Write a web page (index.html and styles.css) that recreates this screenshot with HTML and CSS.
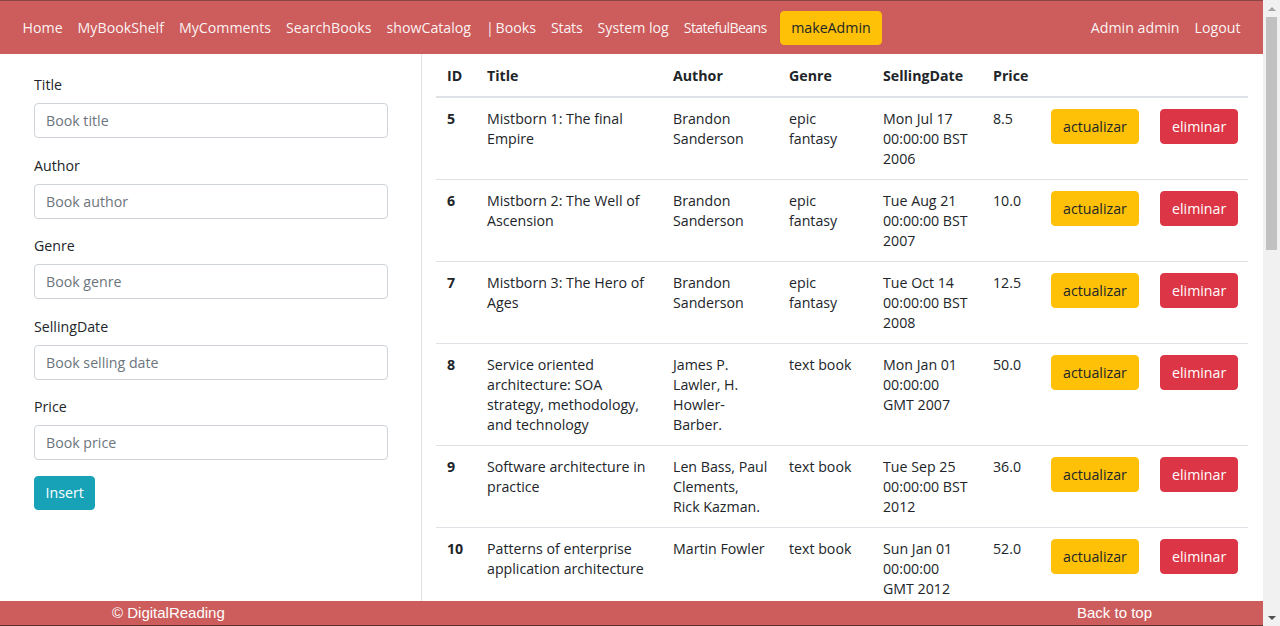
FILE: index.html
```html
<!DOCTYPE html>
<html lang="en">
<head>
<meta charset="utf-8">
<title>DigitalReading - Books</title>
<link rel="stylesheet" href="styles.css">
</head>
<body>
<div class="viewport">
  <div class="page">
    <nav class="navbar">
      <ul class="nav-list">
        <li><a class="nav-link" href="#">Home</a></li>
        <li><a class="nav-link" href="#">MyBookShelf</a></li>
        <li><a class="nav-link" href="#">MyComments</a></li>
        <li><a class="nav-link" href="#">SearchBooks</a></li>
        <li><a class="nav-link" href="#">showCatalog</a></li>
        <li><a class="nav-link" href="#"><span class="pipe">|</span> Books</a></li>
        <li><a class="nav-link nav-link--tight" href="#">Stats</a></li>
        <li><a class="nav-link" href="#">System log</a></li>
        <li><a class="nav-link nav-link--tighter" href="#">StatefulBeans</a></li>
        <li><button class="btn btn-warning nav-btn" type="button">makeAdmin</button></li>
      </ul>
      <ul class="nav-list">
        <li><a class="nav-link" href="#">Admin admin</a></li>
        <li><a class="nav-link" href="#">Logout</a></li>
      </ul>
    </nav>

    <div class="content">
      <aside class="sidebar">
        <form class="book-form">
          <div class="form-group">
            <label class="form-label" for="title">Title</label>
            <input class="form-control" id="title" type="text" placeholder="Book title">
          </div>
          <div class="form-group">
            <label class="form-label" for="author">Author</label>
            <input class="form-control" id="author" type="text" placeholder="Book author">
          </div>
          <div class="form-group">
            <label class="form-label" for="genre">Genre</label>
            <input class="form-control" id="genre" type="text" placeholder="Book genre">
          </div>
          <div class="form-group">
            <label class="form-label" for="date">SellingDate</label>
            <input class="form-control" id="date" type="text" placeholder="Book selling date">
          </div>
          <div class="form-group form-group--last">
            <label class="form-label" for="price">Price</label>
            <input class="form-control" id="price" type="text" placeholder="Book price">
          </div>
          <button class="btn btn-info" type="button">Insert</button>
        </form>
      </aside>

      <main class="main">
        <table class="books">
          <colgroup>
            <col class="c-id"><col class="c-title"><col class="c-author"><col class="c-genre">
            <col class="c-date"><col class="c-price"><col class="c-act"><col class="c-del">
          </colgroup>
          <thead>
            <tr><th>ID</th><th>Title</th><th>Author</th><th>Genre</th><th>SellingDate</th><th>Price</th><th></th><th></th></tr>
          </thead>
          <tbody>
            <tr>
              <th scope="row">5</th><td>Mistborn 1: The final Empire</td><td class="author">Brandon Sanderson</td><td>epic fantasy</td>
              <td class="date">Mon Jul 17 00:00:00 BST 2006</td><td>8.5</td>
              <td><button class="btn btn-warning" type="button">actualizar</button></td>
              <td><button class="btn btn-danger" type="button">eliminar</button></td>
            </tr>
            <tr>
              <th scope="row">6</th><td>Mistborn 2: The Well of Ascension</td><td class="author">Brandon Sanderson</td><td>epic fantasy</td>
              <td class="date">Tue Aug 21 00:00:00 BST 2007</td><td>10.0</td>
              <td><button class="btn btn-warning" type="button">actualizar</button></td>
              <td><button class="btn btn-danger" type="button">eliminar</button></td>
            </tr>
            <tr>
              <th scope="row">7</th><td>Mistborn 3: The Hero of Ages</td><td class="author">Brandon Sanderson</td><td>epic fantasy</td>
              <td class="date">Tue Oct 14 00:00:00 BST 2008</td><td>12.5</td>
              <td><button class="btn btn-warning" type="button">actualizar</button></td>
              <td><button class="btn btn-danger" type="button">eliminar</button></td>
            </tr>
            <tr>
              <th scope="row">8</th><td>Service oriented architecture: SOA strategy, methodology, and technology</td><td class="author">James P. Lawler, H. Howler-Barber.</td><td>text book</td>
              <td class="date">Mon Jan 01 00:00:00 GMT 2007</td><td>50.0</td>
              <td><button class="btn btn-warning" type="button">actualizar</button></td>
              <td><button class="btn btn-danger" type="button">eliminar</button></td>
            </tr>
            <tr>
              <th scope="row">9</th><td>Software architecture in practice</td><td class="author">Len Bass, Paul Clements, Rick Kazman.</td><td>text book</td>
              <td class="date">Tue Sep 25 00:00:00 BST 2012</td><td>36.0</td>
              <td><button class="btn btn-warning" type="button">actualizar</button></td>
              <td><button class="btn btn-danger" type="button">eliminar</button></td>
            </tr>
            <tr>
              <th scope="row">10</th><td>Patterns of enterprise application architecture</td><td class="author">Martin Fowler</td><td>text book</td>
              <td class="date">Sun Jan 01 00:00:00 GMT 2012</td><td>52.0</td>
              <td><button class="btn btn-warning" type="button">actualizar</button></td>
              <td><button class="btn btn-danger" type="button">eliminar</button></td>
            </tr>
          </tbody>
        </table>
      </main>
    </div>

    <footer class="footer">
      <span>© DigitalReading</span>
      <a class="footer-link" href="#">Back to top</a>
    </footer>
  </div>

  <div class="scrollbar" aria-hidden="true">
    <span class="sb-arrow sb-up"></span>
    <span class="sb-track"><span class="sb-thumb"></span></span>
    <span class="sb-arrow sb-down"></span>
  </div>
</div>
</body>
</html>
```

FILE: styles.css
```css
* {
  box-sizing: border-box;
}

html,
body {
  margin: 0;
  height: 100%;
  overflow: hidden;
}

body {
  font-family: "Open Sans", "Noto Sans", sans-serif;
  font-size: 14.2px;
  line-height: 20px;
  color: #212529;
  background: #fff;
}

.viewport {
  display: flex;
  height: 100vh;
}

.page {
  position: relative;
  flex: 1;
  min-width: 0;
  display: flex;
  flex-direction: column;
  overflow: hidden;
}

/* ---------- navbar ---------- */
.navbar {
  flex: 0 0 auto;
  height: 54px;
  display: flex;
  align-items: center;
  justify-content: space-between;
  padding: 0 15px;
  background: #cd5c5c;
  border-top: 1px solid #8a4646;
}

.nav-list {
  display: flex;
  align-items: center;
  list-style: none;
  margin: 0;
  padding: 0;
}

.nav-link {
  display: block;
  padding: 0 7.5px;
  color: rgba(255, 255, 255, 0.94);
  text-decoration: none;
  white-space: nowrap;
}

.pipe {
  margin-right: -2px;
}

.nav-link--tight {
  letter-spacing: -0.2px;
}

.nav-link--tighter {
  letter-spacing: -0.65px;
}

.btn {
  display: inline-flex;
  align-items: center;
  justify-content: center;
  height: 35px;
  padding: 0 11px;
  border: 1px solid transparent;
  border-radius: 4px;
  font-family: inherit;
  font-size: 14.2px;
  line-height: 20px;
  white-space: nowrap;
  cursor: pointer;
}

.nav-btn {
  height: 34px;
  margin-left: 5.5px;
  padding: 0 10.5px;
}

.btn-warning {
  background: #ffc107;
  border-color: #ffc107;
  color: #212529;
}

.btn-danger {
  background: #dc3545;
  border-color: #dc3545;
  color: #fff;
}

.btn-info {
  height: 34px;
  background: #17a2b8;
  border-color: #17a2b8;
  color: #fff;
  padding: 0 10.5px;
}

/* ---------- content ---------- */
.content {
  flex: 1;
  display: flex;
  min-height: 0;
}

.sidebar {
  flex: 0 0 422px;
  padding: 21px 33px 0 34px;
  border-right: 1px solid #dee2e6;
}

.form-group {
  margin-bottom: 17.5px;
}

.form-group--last {
  margin-bottom: 16px;
}

.form-label {
  display: block;
  margin-bottom: 8px;
}

.form-control {
  display: block;
  width: 100%;
  height: 35px;
  padding: 0 11px;
  border: 1px solid #ced4da;
  border-radius: 4px;
  font-family: inherit;
  font-size: 14.2px;
  color: #495057;
  background: #fff;
}

.form-control::placeholder {
  color: #6c757d;
  opacity: 1;
}

.main {
  flex: 1;
  min-width: 0;
  padding: 0 15px 0 14px;
}

.books {
  width: 812px;
  border-collapse: collapse;
  table-layout: fixed;
}

.c-id { width: 40px; }
.c-title { width: 186px; }
.c-author { width: 116px; }
.c-genre { width: 94px; }
.c-date { width: 110px; }
.c-price { width: 58px; }
.c-act { width: 109px; }
.c-del { width: 99px; }

.books th,
.books td {
  text-align: left;
  vertical-align: top;
  padding: 11px 8px 10px 11px;
}

.books thead th {
  vertical-align: bottom;
  padding: 12px 8px 10px 11px;
  border-bottom: 2px solid #dee2e6;
  font-weight: 700;
}

.books tbody th,
.books tbody td {
  border-top: 1px solid #dee2e6;
}

.books tbody th {
  font-weight: 700;
}

.books td.author {
  padding-right: 9.5px;
}

.books td.date {
  padding-right: 11px;
}

/* ---------- footer ---------- */
.footer {
  position: absolute;
  left: 0;
  right: 0;
  bottom: 0;
  height: 25px;
  display: flex;
  align-items: center;
  justify-content: space-between;
  padding: 0 111px 0 112px;
  background: #cd5c5c;
  border-bottom: 1px solid #5e2f2f;
  font-family: "Liberation Sans", Arial, sans-serif;
  font-size: 15px;
  line-height: 22px;
  color: #fff;
}

.footer-link {
  color: #fff;
  text-decoration: none;
}

/* ---------- scrollbar ---------- */
.scrollbar {
  flex: 0 0 17px;
  display: flex;
  flex-direction: column;
  background: #f1f1f1;
}

.sb-arrow {
  flex: 0 0 17px;
  display: flex;
  align-items: center;
  justify-content: center;
}

.sb-arrow::before {
  content: "";
  width: 0;
  height: 0;
  border-left: 4px solid transparent;
  border-right: 4px solid transparent;
}

.sb-up::before {
  border-bottom: 4px solid #a3a3a3;
}

.sb-down::before {
  border-top: 4px solid #505050;
}

.sb-track {
  flex: 1;
  display: flex;
  flex-direction: column;
  align-items: center;
}

.sb-thumb {
  width: 11px;
  height: 233px;
  background: #c1c1c1;
}
```
